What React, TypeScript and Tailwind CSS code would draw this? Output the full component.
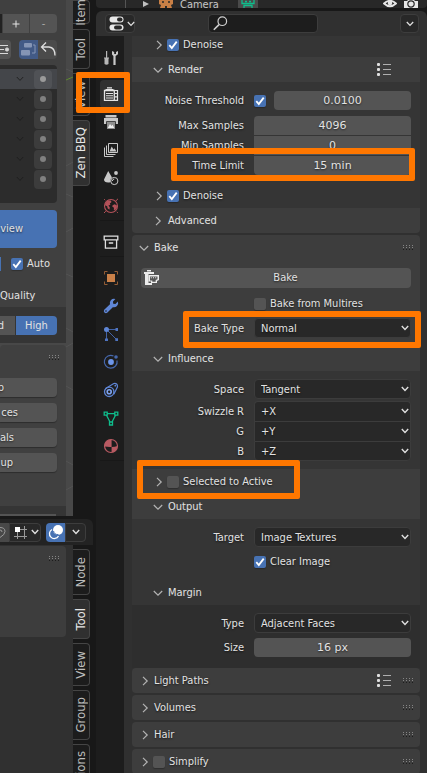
import type { ReactNode } from "react";

const FONT = "font-['DejaVu_Sans_Condensed','DejaVu_Sans',sans-serif]";
const SHADOW = "[text-shadow:0_1px_2px_rgba(0,0,0,0.6)]";

/* ---------- small shared pieces ---------- */

function Chevron({ open = false, className = "" }: { open?: boolean; className?: string }) {
  return (
    <svg viewBox="0 0 10 10" className={`size-2.5 shrink-0 ${className}`} fill="none" stroke="#b4b4b4" strokeWidth="1.2">
      {open ? <path d="M0.8 3 5 7.2 9.2 3" /> : <path d="M3 0.8 7.2 5 3 9.2" />}
    </svg>
  );
}

function Dots() {
  return (
    <svg viewBox="0 0 12 6" className="h-1.5 w-3 shrink-0">
      {[1, 4, 7, 10].map((x) =>
        [0, 2, 4].map((y) => <rect key={`${x}-${y}`} x={x} y={y} width="1" height="1" fill={y === 4 ? "#1c1c1c" : "#858585"} />),
      )}
    </svg>
  );
}

function PresetIcon() {
  return (
    <svg viewBox="0 0 16 16" className="size-4 shrink-0" fill="#e0e0e0">
      <rect x="1" y="1" width="3" height="3" rx="1" />
      <rect x="1" y="6" width="3" height="3" rx="1" />
      <rect x="1" y="11" width="3" height="3" rx="1" />
      <path d="M7 2h8v1H7zM7 7h8v1H7zM7 12h8v1H7z" opacity="0.7" />
    </svg>
  );
}

function Check({ id, checked = false, label }: { id: string; checked?: boolean; label?: string }) {
  return (
    <span className="grid size-3 shrink-0">
      <input
        id={id}
        type="checkbox"
        defaultChecked={checked}
        aria-label={label}
        className="peer col-start-1 row-start-1 size-3 appearance-none rounded-xs bg-[#545454] shadow-[0_1px_1px_rgba(0,0,0,0.25)] checked:bg-[#4772b3]"
      />
      <svg viewBox="0 0 12 12" className="pointer-events-none invisible col-start-1 row-start-1 size-3 peer-checked:visible" fill="none" stroke="#fff" strokeWidth="1.8">
        <path d="M2.3 6.2 4.8 9 9.7 2.6" />
      </svg>
    </span>
  );
}

function Highlight({ className }: { className: string }) {
  return <div aria-hidden="true" className={`pointer-events-none absolute z-10 rounded-xs border-6 border-[#ff7700] ${className}`} />;
}

function Row({ children, className = "" }: { children: ReactNode; className?: string }) {
  return <div className={`grid grid-cols-[103px_1fr] items-center gap-x-2.5 ${className}`}>{children}</div>;
}

function NumberField({ id, value, className = "rounded-sm" }: { id: string; value: string; className?: string }) {
  return (
    <input
      id={id}
      type="text"
      defaultValue={value}
      className={`h-[19px] w-full min-w-0 bg-[#545454] text-center font-['DejaVu_Sans',sans-serif] ${SHADOW} ${className}`}
    />
  );
}

function Select({ id, value, className = "rounded-sm" }: { id: string; value: string; className?: string }) {
  return (
    <span className="grid min-w-0 items-center">
      <select id={id} className={`col-start-1 row-start-1 h-5 w-full appearance-none border border-[#3c3c3c] bg-[#282828] pt-px pl-1.5 ${SHADOW} ${className}`}>
        <option>{value}</option>
      </select>
      <svg viewBox="0 0 8 6" className="pointer-events-none col-start-1 row-start-1 mr-0.5 h-1.5 w-2 justify-self-end" fill="none" stroke="#e0e0e0" strokeWidth="1.4">
        <path d="M0.8 1 4 4.4 7.2 1" />
      </svg>
    </span>
  );
}

function Label({ htmlFor, children }: { htmlFor: string; children: ReactNode }) {
  return (
    <label htmlFor={htmlFor} className="pt-px text-right whitespace-nowrap">
      {children}
    </label>
  );
}

function SubHeader({ title, open = false, className = "", children }: { title: string; open?: boolean; className?: string; children?: ReactNode }) {
  return (
    <div className={`relative flex h-[25px] items-center pt-px pr-7 pl-[21px] ${className}`}>
      <button type="button" className="flex items-center gap-[5px]">
        <Chevron open={open} />
        {title}
      </button>
      <span className="ml-auto">{children}</span>
    </div>
  );
}

function CheckHeader({ id, title, checked, className = "", children }: { id: string; title: string; checked?: boolean; className?: string; children?: ReactNode }) {
  return (
    <div className={`relative flex h-[25px] shrink-0 items-center pt-px pl-[22px] ${className}`}>
      <Chevron />
      <span className="ml-[3px] flex">
        <Check id={id} checked={checked} />
      </span>
      <label htmlFor={id} className="ml-1">
        {title}
      </label>
      {children}
    </div>
  );
}

function ClosedPanel({ title, preset, check }: { title: string; preset?: boolean; check?: string }) {
  return (
    <section className="flex h-[25px] shrink-0 items-center rounded-sm bg-[#3d3d3d] pt-px pr-1.5 pl-2">
      <Chevron />
      {check ? (
        <>
          <span className="ml-[3px] flex">
            <Check id={check} />
          </span>
          <label htmlFor={check} className="ml-1">
            {title}
          </label>
        </>
      ) : (
        <h2 className="ml-1">{title}</h2>
      )}
      <span className="ml-auto flex items-center gap-2.5">
        {preset && <PresetIcon />}
        <Dots />
      </span>
    </section>
  );
}

/* ---------- properties editor tab icons ---------- */

const G = "#c8c8c8";

const toolIcon = (
  <>
    <path fill={G} d="M3 1h1.2v7H3zM1.5 8.5h4V14q-2 1.4-4 0zM1 7.5h5v1H1z" opacity="0.9" />
    <path fill={G} d="M9 1v3.5L10.4 6V15h2.2V6L15 4.2V1l-2 1v2h-1.8V2z" />
  </>
);
const renderIcon = (
  <>
    <path fill="none" stroke="#e4e4e4" strokeWidth="1.3" d="M1.5 4.5h9.8v9.8H1.5z" />
    <path fill="#e4e4e4" d="M4 1.2h5V2.5H4zM2.5 3h8v1.2h-8zM3 7h7v1H3zM3 9.3h7v1H3zM3 11.6h7v1H3z" />
    <path fill="none" stroke="#e4e4e4" strokeWidth="1.2" d="M11.5 4.5h3v9.8h-3M12 7.5h2.5M12 10.8h2.5" />
  </>
);
const outputIcon = (
  <>
    <path fill={G} d="M2.5 1h11v2.5h-11zM1 4h14v6h-2.2V7.2H3.2V10H1z" />
    <path fill="#8f8f8f" d="M4 8h8v7H4z" />
    <path fill="#eee" d="M4.8 14 7 10l1.5 2 1-1.2 1.8 3.2z" />
  </>
);
const viewLayerIcon = (
  <>
    <path fill="none" stroke={G} d="M5.5 1.5h9v9h-9zM3.5 3.5v9h9M1.5 5.5v9h9" />
    <path fill={G} d="m6.5 9.5 2.2-5 1.8 3 1-1.3 2 3.3z" />
  </>
);
const sceneIcon = (
  <>
    <path fill={G} d="M5.2 1 1 9.5q0 3 4.2 3 1.4 0 2.3-.6Q7.3 8 9 7.4z" />
    <circle cx="13" cy="3" r="1.9" fill={G} />
    <circle cx="11.3" cy="11" r="3.6" fill="none" stroke={G} />
    <path fill="none" stroke={G} d="M9.3 11q.2-1.8 2-2" />
  </>
);
const worldIcon = (
  <>
    <circle cx="8" cy="8" r="6.5" fill="none" stroke="#b4525a" strokeWidth="1.1" />
    <path fill="#b4525a" d="M2.2 5.4 4.6 2.6 7.6 2.4 8.6 4 6.8 5.4l.6 1.4-2 .8 1.4 1.6-.4 2.6-1.8-1.6-.4-2-2.2-1zM9.4 7.4l2-1.2 2.4 1 .2 2.4-2 2.6-1.2-.4.2-2-1.6-1z" />
    <path stroke="#b4525a" d="M12.4 3.4 15 .8M1 15l1.8-1.8M1.2 1.2l1 1M13.8 13.8l1 1" />
  </>
);
const archiveIcon = <path fill="none" stroke="#e0e0e0" strokeWidth="1.3" d="M1.2 2.2h13.6v3.6H1.2zM2.4 6v8.2h11.2V6M5.8 9h4.4" />;
const objectIcon = (
  <>
    <path fill="#cb8149" d="M4 4h8v8H4z" />
    <path fill="none" stroke="#935c35" d="M1.5 4.5v-3h3M11.5 1.5h3v3M14.5 11.5v3h-3M4.5 14.5h-3v-3" />
  </>
);
const wrenchIcon = (
  <path fill="#5f86d6" d="M14.9 3.5 12.4 6 10.2 5.7 10 3.5 12.4 1Q9.6.2 7.8 2.2 6.3 4 7 6.2L1.2 11.8Q.3 13.4 1.4 14.6 2.8 15.7 4.2 14.8L9.8 9.2Q12.2 9.8 14 8 15.8 6 14.9 3.5ZM3 13.8a.8.8 0 1 1 0-1.6.8.8 0 0 1 0 1.6Z" />
);
const particleIcon = (
  <>
    <path fill="none" stroke="#4363a5" d="M4 3.5h9M3.5 4v9M4 4l9.5 9.5" />
    <circle cx="3.5" cy="3.5" r="2.5" fill="#5f86d6" />
    <path fill="#4f74c0" d="M12.5 2h2.5v3h-2.5zM2 12.5h3V15H2zM12.3 12.3H15V15h-2.7z" />
  </>
);
const physicsIcon = (
  <>
    <path fill="none" stroke="#4668ad" strokeWidth="1.2" d="M10.5 2A6.4 6.4 0 1 0 14 6.5" />
    <circle cx="8" cy="8" r="2.9" fill="#6d96ea" />
    <circle cx="13" cy="3" r="1.8" fill="#4668ad" />
  </>
);
const constraintIcon = (
  <>
    <path fill="none" stroke="#5f86d6" strokeWidth="1.2" d="M2.6 6.6 10.8 1.5Q14.6.8 14.5 4.8L10.8 12.3" />
    <circle cx="6.2" cy="9.8" r="4.7" fill="none" stroke="#5f86d6" strokeWidth="1.3" />
    <circle cx="6.2" cy="9.8" r="2" fill="none" stroke="#7ea3f0" strokeWidth="1.6" />
    <circle cx="12.3" cy="3.7" r="0.9" fill="#5f86d6" />
  </>
);
const dataIcon = (
  <path fill="none" stroke="#0fbd8c" strokeWidth="1.3" d="M1.2 2.2h3v3h-3zM11.8 2.2h3v3h-3zM6.5 12h3v3h-3zM4.2 3.7h7.6M3.5 5.2 7 12M12.5 5.2 9 12" />
);
const materialIcon = (
  <>
    <circle cx="8" cy="8" r="6.5" fill="#1d1d1d" stroke="#b85a62" strokeWidth="1.2" />
    <path fill="#b85a62" d="M1.5 8.6A6.5 6.5 0 0 1 8.6 1.5V9Q5 9.2 1.5 8.6zM8.6 9Q12 8.8 14.5 8A6.5 6.5 0 0 1 8.6 14.5z" />
  </>
);

function TabButton({ name, icon, active }: { name: string; icon: ReactNode; active?: boolean }) {
  return (
    <button
      type="button"
      aria-label={name}
      className={`relative flex h-7 w-full items-center justify-center rounded-l-sm pr-0.5 ${active ? "bg-[#303030]" : ""}`}
    >
      <svg viewBox="0 0 16 16" className="size-4">
        {icon}
      </svg>
      {active && <Highlight className="-top-2 -right-1.5 h-[41px] w-[54px]" />}
    </button>
  );
}

function TabColumn() {
  return (
    <nav aria-label="Properties tabs" className="flex w-7 shrink-0 flex-col gap-2 bg-[#1d1d1d] pt-2 pl-1">
      <TabButton name="Tool" icon={toolIcon} />
      <div className="border-b border-[#181818]">
        <TabButton name="Render" icon={renderIcon} active />
        <TabButton name="Output" icon={outputIcon} />
        <TabButton name="View Layer" icon={viewLayerIcon} />
        <TabButton name="Scene" icon={sceneIcon} />
        <TabButton name="World" icon={worldIcon} />
      </div>
      <div className="-mt-px border-b border-[#181818]">
        <TabButton name="Collection" icon={archiveIcon} />
      </div>
      <div className="-mt-px border-b border-[#181818]">
        <TabButton name="Object" icon={objectIcon} />
        <TabButton name="Modifiers" icon={wrenchIcon} />
        <TabButton name="Particles" icon={particleIcon} />
        <TabButton name="Physics" icon={physicsIcon} />
        <TabButton name="Constraints" icon={constraintIcon} />
        <TabButton name="Data" icon={dataIcon} />
        <TabButton name="Material" icon={materialIcon} />
      </div>
    </nav>
  );
}

/* ---------- top strips on the right ---------- */

function OutlinerStrip() {
  return (
    <div className="flex h-2 shrink-0 items-start overflow-hidden rounded-b-sm bg-[#282828] pr-2">
      <span className="ml-[29px] h-2 w-px bg-[#555]" />
      <svg viewBox="0 0 6 8" className="ml-[17px] h-2 w-1.5" fill="#c0c0c0">
        <path d="M0 1v6l6-3z" />
      </svg>
      <svg viewBox="0 0 16 8" className="ml-[9px] h-2 w-4">
        <path fill="#c87f45" d="M1 0h14v4l-2 1 1 3H9V6H7v2H2l1-3-2-1z" />
        <circle cx="5" cy="2" r="1" fill="#282828" />
        <circle cx="11" cy="2" r="1" fill="#282828" />
      </svg>
      <span className="ml-[6px] leading-[10px] text-[#c6c6c6]">Camera</span>
      <span className="ml-[19px] flex h-2 w-5 justify-center bg-[#4a4a4a]">
        <svg viewBox="0 0 16 8" className="h-2 w-4" fill="none" stroke="#0fbd8c" strokeWidth="1.3">
          <path d="M2 0v3.5h12V0M4 8V5.5h8V8M5 1.5h2M9 1.5h2" />
        </svg>
      </span>
      <svg viewBox="0 0 14 8" className="ml-auto h-2 w-3.5" fill="none" stroke="#e6e6e6" strokeWidth="1.8">
        <path d="M1 3.5Q7-2 13 3.5 7 9 1 3.5z" />
        <circle cx="7" cy="3" r="1.4" fill="#e6e6e6" />
      </svg>
      <svg viewBox="0 0 14 8" className="mr-px ml-[7px] h-2 w-3.5">
        <path fill="#e6e6e6" d="M0 1h3l1-1h6l1 1h3v7H0z" />
        <circle cx="7" cy="4" r="3.2" fill="none" stroke="#282828" strokeWidth="1.2" />
      </svg>
    </div>
  );
}

function PropertiesHeader() {
  return (
    <header className="mt-[3px] flex h-[25px] shrink-0 items-start rounded-t-md bg-[#303030] pt-[3px] pr-2 pl-[9px]">
      <button type="button" aria-label="Editor type" className="flex h-[19px] w-[30px] items-center gap-[3px] rounded-sm border border-[#3d3d3d] bg-[#282828] pl-[3px]">
        <svg viewBox="0 0 15 15" className="h-[15px] w-[15px] shrink-0">
          <rect x="0.5" y="0.5" width="14" height="6" rx="3" fill="#e8e8e8" />
          <rect x="8" y="1.5" width="5.5" height="4" rx="2" fill="#282828" />
          <rect x="0.5" y="8.5" width="14" height="6" rx="3" fill="#e8e8e8" />
          <rect x="5" y="9.5" width="8" height="4" rx="2" fill="#282828" />
        </svg>
        <svg viewBox="0 0 8 6" className="h-1.5 w-2 shrink-0" fill="none" stroke="#e0e0e0" strokeWidth="1.2">
          <path d="M0.8 1 4 4.4 7.2 1" />
        </svg>
      </button>
      <div className="flex min-w-0 grow justify-center pr-2.5">
        <label className="flex h-[19px] w-[110px] items-center rounded-sm border border-[#3d3d3d] bg-[#1d1d1d] pl-1">
          <svg viewBox="0 0 15 15" className="size-[15px] shrink-0" fill="none" stroke="#cfcfcf" strokeWidth="1.2">
            <circle cx="9.3" cy="5.2" r="4.3" />
            <path d="M6 8.6.8 13.8" strokeWidth="1.6" />
          </svg>
          <input type="search" aria-label="Search properties" className="w-full min-w-0 bg-transparent outline-none" />
        </label>
      </div>
      <button type="button" aria-label="Options" className="flex size-[19px] items-center justify-center rounded-sm border border-[#3d3d3d] bg-[#282828]">
        <svg viewBox="0 0 8 6" className="h-1.5 w-2" fill="none" stroke="#e0e0e0" strokeWidth="1.3">
          <path d="M0.8 1 4 4.4 7.2 1" />
        </svg>
      </button>
    </header>
  );
}

/* ---------- properties panels ---------- */

function SamplingPanel() {
  return (
    <section className="shrink-0 rounded-b-sm bg-[#3d3d3d]">
      <div className="flex h-[21px] flex-col justify-end overflow-hidden bg-[#353535]">
        <CheckHeader id="viewport-denoise" title="Denoise" checked />
      </div>
      <SubHeader title="Render" open className="bg-[#3d3d3d]">
        <PresetIcon />
      </SubHeader>
      <div className="bg-[#353535] pt-[9px]">
        <div className="px-[9px]">
          <Row>
            <Label htmlFor="noise">Noise Threshold</Label>
            <div className="flex items-center gap-2">
              <Check id="use-noise" checked label="Use noise threshold" />
              <NumberField id="noise" value="0.0100" />
            </div>
          </Row>
          <div className="mt-1.5 flex flex-col gap-px">
            <Row>
              <Label htmlFor="max">Max Samples</Label>
              <NumberField id="max" value="4096" className="rounded-t-sm" />
            </Row>
            <Row>
              <Label htmlFor="min">Min Samples</Label>
              <NumberField id="min" value="0" className="" />
            </Row>
            <Row className="relative">
              <Label htmlFor="time">Time Limit</Label>
              <NumberField id="time" value="15 min" className="rounded-b-sm" />
              <Highlight className="-top-2 -right-1 h-[33px] w-[244px]" />
            </Row>
          </div>
        </div>
        <CheckHeader id="render-denoise" title="Denoise" checked className="mt-2" />
      </div>
      <SubHeader title="Advanced" />
    </section>
  );
}

function BakePanel() {
  return (
    <section className="mt-0.5 shrink-0 rounded-t-sm bg-[#3d3d3d]">
      <div className="flex h-[25px] items-center justify-between pt-px pr-1.5 pl-[7px]">
        <button type="button" className="flex items-center gap-[5px]">
          <Chevron open />
          Bake
        </button>
        <Dots />
      </div>
      <div className="px-[9px] pt-2">
        <button type="button" className={`grid h-5 w-full grid-cols-[auto_1fr] items-center rounded-sm bg-[#545454] pl-[3px] ${SHADOW}`}>
          <svg viewBox="0 0 16 16" className="size-4" fill="#ececec">
            <path d="M3 0h4v1.5H3zM0 2h10v2H0zM1 4h3.5v9H8v2H1z" />
            <path fillRule="evenodd" d="M4.5 5H15v5l-2 1v2H7v-1.5H4.5zM6 6.5v4h2.3v1.3h3.4V10l1.8-.8V6.5z" />
            <path d="M6.8 7.2h1v1h-1zM9 7.2h1v1H9zM11.2 7.2h1v1h-1z" />
          </svg>
          <span>Bake</span>
        </button>
        <Row className="mt-2 h-[15px]">
          <span />
          <span className="flex items-center gap-1">
            <Check id="multires" />
            <label htmlFor="multires">Bake from Multires</label>
          </span>
        </Row>
        <Row className="relative mt-[7px]">
          <Label htmlFor="bake-type">Bake Type</Label>
          <Select id="bake-type" value="Normal" />
          <Highlight className="-top-[7px] -right-2.5 h-[37px] w-[238px]" />
        </Row>
      </div>
      <SubHeader title="Influence" open className="mt-2" />
      <div className="bg-[#353535] px-[9px] pt-2 pb-2">
        <Row>
          <Label htmlFor="space">Space</Label>
          <Select id="space" value="Tangent" />
        </Row>
        <div className="mt-0.5 flex flex-col">
          <Row>
            <Label htmlFor="swizzle-r">Swizzle R</Label>
            <Select id="swizzle-r" value="+X" className="rounded-t-sm border-b-0" />
          </Row>
          <Row>
            <Label htmlFor="swizzle-g">G</Label>
            <Select id="swizzle-g" value="+Y" className="border-b-0" />
          </Row>
          <Row>
            <Label htmlFor="swizzle-b">B</Label>
            <Select id="swizzle-b" value="+Z" className="rounded-b-sm" />
          </Row>
        </div>
      </div>
      <CheckHeader id="selected" title="Selected to Active">
        <Highlight className="-top-[9px] left-[5px] h-[39px] w-[163px]" />
      </CheckHeader>
      <SubHeader title="Output" open />
      <div className="bg-[#353535] pt-2">
        <div className="px-[9px]">
          <Row>
            <Label htmlFor="target">Target</Label>
            <Select id="target" value="Image Textures" />
          </Row>
          <Row className="mt-[7px] h-[15px]">
            <span />
            <span className="flex items-center gap-1">
              <Check id="clear" checked />
              <label htmlFor="clear">Clear Image</label>
            </span>
          </Row>
        </div>
        <SubHeader title="Margin" open className="mt-[11px]" />
      </div>
      <div className="bg-[#2e2e2e] px-[9px] pt-2 pb-[11px]">
        <Row>
          <Label htmlFor="margin-type">Type</Label>
          <Select id="margin-type" value="Adjacent Faces" />
        </Row>
        <Row className="mt-[5px]">
          <Label htmlFor="margin-size">Size</Label>
          <NumberField id="margin-size" value="16 px" />
        </Row>
      </div>
    </section>
  );
}

/* ---------- left side ---------- */

function SideTab({ title, active, className = "" }: { title: string; active?: boolean; className?: string }) {
  return (
    <button
      type="button"
      className={`flex w-[17px] shrink-0 items-center rounded-r-sm border border-l-0 border-[#454545] text-[13px] leading-4 ${active ? "bg-[#303030] text-[#e6e6e6]" : "bg-[#1c1c1c] text-[#bdbdbd]"} ${className}`}
    >
      <span className="rotate-180 whitespace-nowrap [writing-mode:vertical-rl]">{title}</span>
    </button>
  );
}

function CutButton({ text, className = "" }: { text: string; className?: string }) {
  return (
    <button type="button" className={`flex h-[19px] w-[57px] items-center justify-end rounded-r-sm bg-[#545454] shadow-[0_1px_1px_rgba(0,0,0,0.3)] ${SHADOW} ${className}`}>
      {text}
    </button>
  );
}

function ListRow({ selected }: { selected?: boolean }) {
  return (
    <li className={`flex h-5 items-center justify-end gap-2.5 ${selected ? "bg-[#44464a]" : ""}`}>
      <svg viewBox="0 0 8 6" className="h-1.5 w-2" fill="none" stroke={selected ? "#222" : "#1f1f1f"} strokeWidth="1">
        <path d="M0.8 1 4 4.4 7.2 1" />
      </svg>
      <button type="button" aria-label="Toggle item" className={`mr-[5px] flex h-[19px] w-[18px] items-center justify-center rounded-sm ${selected ? "bg-[#505256]" : "bg-[#3c3c3c]"}`}>
        <span className={`size-1.5 rounded-full ${selected ? "bg-[#9a9a9a]" : "bg-[#808080]"}`} />
      </button>
    </li>
  );
}

function UpperEditor() {
  return (
    <div className="flex h-[516px] shrink-0 overflow-hidden">
      <div className="flex w-[66px] shrink-0 flex-col bg-[#484848]">
        <div className="flex flex-col rounded-b-sm bg-[#404040] pt-3.5">
          <div className="flex h-[19px] gap-px">
            <span className="w-0.5 bg-[#222]" />
            <button type="button" className="flex w-[26px] items-center justify-center bg-[#545454]">
              <svg viewBox="0 0 8 8" className="size-2" stroke="#e6e6e6">
                <path d="M4 0.5v7M0.5 4h7" />
              </svg>
            </button>
            <button type="button" className="flex w-[27px] items-center justify-center rounded-r-sm bg-[#545454] text-[#aaa]">
              -
            </button>
          </div>
          <div className="mt-[7px] flex h-[19px]">
            <button type="button" aria-label="Align" className="w-[11px] rounded-r-sm bg-[#545454]">
              <svg viewBox="0 0 11 19" className="h-[19px] w-[11px]" stroke="#d8d8d8">
                <path d="M0 5.5h8M0 9.5h4M0 13.5h8" />
                <circle cx="7" cy="9.5" r="1.6" fill="#d8d8d8" />
              </svg>
            </button>
            <button type="button" aria-label="Link" className="ml-2 w-[19px] rounded-l-sm bg-[#425a86]">
              <svg viewBox="0 0 19 19" className="size-[19px]">
                <rect x="5" y="3" width="8" height="4.5" rx="1" fill="#8595b5" />
                <rect x="2" y="10" width="9" height="5.5" rx="1" fill="#8595b5" />
                <path d="M14 5h2v8h-3" fill="none" stroke="#8595b5" />
              </svg>
            </button>
            <button type="button" aria-label="Undo" className="w-[19px] rounded-r-sm bg-[#4b4b4b]">
              <svg viewBox="0 0 19 19" className="size-[19px]" fill="none" stroke="#dedede" strokeWidth="1.3">
                <path d="M8 2.5 3.5 7 8 11.5M3.5 7H11q6 .5 6 8.5" />
              </svg>
            </button>
          </div>
          <ul className="mt-1.5 mr-[9px] h-[138px] rounded-r-sm bg-[#2c2c2c] pt-1">
            <ListRow selected />
            <ListRow />
            <ListRow />
            <ListRow />
            <ListRow />
            <ListRow />
          </ul>
          <button type="button" className={`mt-[7px] flex h-[38px] w-[57px] items-center justify-end rounded-r-sm bg-[#4772b3] pr-[34px] ${SHADOW}`}>
            view
          </button>
          <div className="mt-[9px] flex h-3.5 items-center">
            <span className="h-3.5 w-px bg-[#4772b3]" />
            <span className="ml-2.5 flex">
              <Check id="auto" checked />
            </span>
            <label htmlFor="auto" className="ml-1">
              Auto
            </label>
          </div>
          <p className="mt-[17px] h-4 leading-4">Quality</p>
          <div className="mt-[3px] flex h-9 gap-px bg-[#353535] pt-[9px]">
            <button type="button" className="flex h-[19px] w-[15px] items-center justify-end bg-[#545454] pr-[11px]">
              d
            </button>
            <button type="button" className="h-[19px] w-[41px] rounded-r-sm bg-[#4772b3]">
              High
            </button>
          </div>
        </div>
        <div className="mt-0.5 flex grow flex-col gap-1.5 rounded-t-sm bg-[#404040] pt-2.5">
          <span className="mb-[11px] self-end pr-1.5">
            <Dots />
          </span>
          <CutButton text="p" className="pr-[53px]" />
          <CutButton text="ces" className="pr-[39px]" />
          <CutButton text="als" className="pr-[43px]" />
          <CutButton text="up" className="pr-11" />
          <div className="mt-auto h-2.5 bg-[#353535] pt-2">
            <div className="h-0.5 w-14 bg-[#545454]" />
          </div>
        </div>
      </div>
      <svg viewBox="0 0 7 516" className="h-[516px] w-[7px] shrink-0 bg-[#484848]" stroke="#535353">
        <path d="M0 69 7 72M0 166 7 162M0 194 7 197M0 232 7 228M0 274 7 277M0 328 7 332M0 347 7 343M0 386 7 390M0 461 7 465M0 490 7 486" />
        <path d="M0 80 7 77" stroke="#5f8a2f" />
      </svg>
      <div className="flex flex-col">
        <SideTab title="Item" className="h-6 justify-center" />
        <SideTab title="Tool" className="mt-[5px] h-10 justify-center" />
        <SideTab title="View" className="mt-1 h-[43px] justify-center" />
        <SideTab title="Zen BBQ" active className="mt-1 h-[66px] justify-center" />
      </div>
    </div>
  );
}

function LowerEditor() {
  return (
    <div className="mt-[3px] flex min-h-0 grow flex-col overflow-hidden">
      <div className="mr-[3px] flex h-[26px] shrink-0 items-center rounded-tr-md bg-[#232323]">
        <button type="button" aria-label="Snap" className="h-[19px] w-[9px] bg-[#484848]">
          <svg viewBox="0 0 9 19" className="h-[19px] w-[9px]" fill="none" stroke="#9a9a9a">
            <path d="M0 4.5q5 0 5 4 0 3-5 6M0 7q2 0 2 2" />
          </svg>
        </button>
        <button type="button" aria-label="Snap target" className="flex h-[19px] w-8 items-center gap-[3px] rounded-r-sm border border-[#3d3d3d] bg-[#282828] pl-[3px]">
          <svg viewBox="0 0 15 15" className="h-[15px] w-[15px] shrink-0" fill="none" stroke="#9a9a9a">
            <path d="M4.5 5v9M11.5 1v13M5 4.5h9M1 11.5h13" />
            <path fill="#fff" stroke="none" d="M2 2h5v5H2z" />
          </svg>
          <svg viewBox="0 0 8 6" className="h-1.5 w-2 shrink-0" fill="none" stroke="#e0e0e0" strokeWidth="1.4">
            <path d="M0.8 1 4 4.4 7.2 1" />
          </svg>
        </button>
        <button type="button" aria-label="Overlays" className="ml-[5px] flex h-[19px] w-[19px] items-center justify-center rounded-l-sm bg-[#4772b3]">
          <svg viewBox="0 0 16 16" className="size-4">
            <circle cx="10" cy="6" r="5" fill="#fff" />
            <path d="M4 5.5A4.8 4.8 0 1 0 10.5 12" fill="none" stroke="#fff" strokeWidth="1.3" />
            <path d="M5.5 7q1 4 5 3.5" fill="none" stroke="#4772b3" strokeWidth="1" />
          </svg>
        </button>
        <button type="button" aria-label="Overlay options" className="flex h-[19px] w-[21px] items-center justify-center rounded-r-sm border border-[#3d3d3d] bg-[#282828]">
          <svg viewBox="0 0 8 6" className="h-1.5 w-2" fill="none" stroke="#e0e0e0" strokeWidth="1.4">
            <path d="M0.8 1 4 4.4 7.2 1" />
          </svg>
        </button>
      </div>
      <div className="flex min-h-0 grow">
        <div className="w-[73px] shrink-0 bg-[#303030] pt-px pr-[7px]">
          <div className="flex h-[91px] justify-end rounded-r-sm bg-[#3d3d3d] pt-2.5 pr-1.5">
            <Dots />
          </div>
        </div>
        <div className="flex flex-col pt-1">
          <SideTab title="Node" className="h-[46px] justify-center" />
          <SideTab title="Tool" active className="mt-1 h-10 justify-center" />
          <SideTab title="View" className="mt-1 h-[43px] justify-center" />
          <SideTab title="Group" className="mt-1 h-[50px] justify-center" />
          <SideTab title="ions" className="mt-1 h-20 items-start pt-1.5" />
        </div>
      </div>
    </div>
  );
}

export default function App() {
  return (
    <main className={`flex h-screen overflow-hidden bg-[#181818] text-[11px] leading-[14px] text-[#e2e2e2] ${FONT}`}>
      <div className="flex w-24 shrink-0 flex-col">
        <UpperEditor />
        <LowerEditor />
      </div>
      <div className="flex min-w-0 grow flex-col">
        <OutlinerStrip />
        <PropertiesHeader />
        <div className="flex min-h-0 grow">
          <TabColumn />
          <div className={`flex min-w-0 grow flex-col bg-[#303030] pr-[7px] pl-2 ${SHADOW}`}>
            <SamplingPanel />
            <BakePanel />
            <div className="flex flex-col gap-0.5">
              <ClosedPanel title="Light Paths" preset />
              <ClosedPanel title="Volumes" />
              <ClosedPanel title="Hair" />
              <ClosedPanel title="Simplify" check="simplify" />
            </div>
          </div>
        </div>
      </div>
    </main>
  );
}
